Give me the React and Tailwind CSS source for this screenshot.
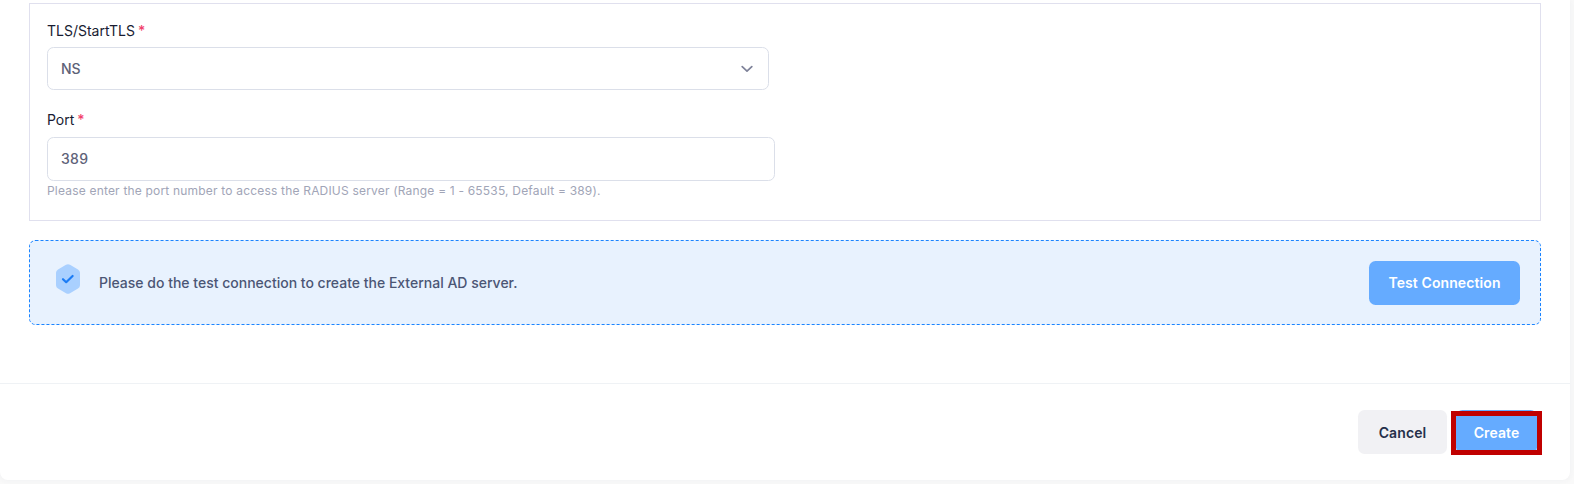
import React from "react";

const inter = "font-['Inter',sans-serif]";

function Label({ children }) {
  return (
    <label className="block text-[14px] leading-[21px] font-normal text-[#181c32]">
      {children}<span className="ml-[3px] font-medium text-[#f1416c]">*</span>
    </label>
  );
}

export default function App() {
  return (
    <div className={`${inter} h-[484px] w-full overflow-hidden bg-[#f9f9f9]`}>
      <div className="flex h-[480px] w-[1570px] flex-col rounded-b-[8px] bg-white shadow-[0_0_6px_rgba(76,87,125,0.06)]">
        <div className="flex-1 px-[29px] pt-[3px]">
          <div className="h-[218px] w-[1512px] border border-[#e0e0ee] px-[17px] pt-[16px]">
            <Label>TLS/StartTLS</Label>
            <div className="mt-[6px] flex h-[43px] w-[722px] items-center justify-between rounded-[6.5px] border border-[#dbdfe9] pr-[15px] pl-[13px] text-[14px] font-medium text-[#5e6278]">
              <span>NS</span>
              <svg width="12" height="8" viewBox="0 0 12 8" fill="none" stroke="#7e8299" strokeWidth="1.7" strokeLinecap="round" strokeLinejoin="round">
                <path d="M1.2 1.6 6 6.2l4.8-4.6" />
              </svg>
            </div>
            <div className="mt-[19px]">
              <Label>Port</Label>
            </div>
            <div className="mt-[7px] flex h-[44px] w-[728px] items-center rounded-[6.5px] border border-[#dbdfe9] pb-[2px] pl-[13px] text-[14px] font-medium tracking-[0.3px] text-[#5e6278]">
              389
            </div>
            <p className="mt-[1px] text-[12px] leading-[18px] tracking-[0.19px] text-[#a1a5b7]">
              Please enter the port number to access the RADIUS server (Range = 1 - 65535, Default = 389).
            </p>
          </div>
          <div className="mt-[19px] flex h-[85px] w-[1512px] items-center justify-between rounded-[6.5px] border border-dashed border-[#1b84ff] bg-[#e8f2fe] pr-[20px] pl-[26px]">
            <div className="flex items-center gap-[19px]">
              <svg className="mb-[8px]" width="24" height="30" viewBox="0 0 24 30">
                <path d="M10 .8a4 4 0 0 1 4 0l8 4.6a4 4 0 0 1 2 3.4v12.4a4 4 0 0 1-2 3.4l-8 4.6a4 4 0 0 1-4 0l-8-4.6a4 4 0 0 1-2-3.4V8.8a4 4 0 0 1 2-3.4z" fill="#a9d0ff" />
                <path d="M7 15.2l3.2 3L16.6 12" fill="none" stroke="#1b7cf5" strokeWidth="2.2" strokeLinecap="round" strokeLinejoin="round" />
              </svg>
              <span className="text-[14px] font-medium text-[#4b5675]">
                Please do the test connection to create the External AD server.
              </span>
            </div>
            <button className="flex h-[44px] w-[151px] items-center justify-center rounded-[6.5px] bg-[#65abff] text-[14px] font-semibold tracking-[0.1px] text-white">
              Test Connection
            </button>
          </div>
        </div>
        <div className="flex h-[97px] justify-end gap-[9px] border-t border-[#eff2f5] pt-[26px] pr-[33px]">
          <button className="h-[44px] w-[89px] rounded-[6.5px] bg-[#f1f1f4] text-[14px] font-semibold tracking-[0.1px] text-[#252f4a]">
            Cancel
          </button>
          <div className="relative h-[44px] w-[81px]">
            <button className="h-full w-full rounded-[6.5px] bg-[#65abff] text-[14px] font-semibold tracking-[0.1px] text-white">
              Create
            </button>
            <div className="absolute top-[1px] -right-[5px] -bottom-[1px] -left-[5px] border-[5px] border-[#c00000]" />
          </div>
        </div>
      </div>
    </div>
  );
}
